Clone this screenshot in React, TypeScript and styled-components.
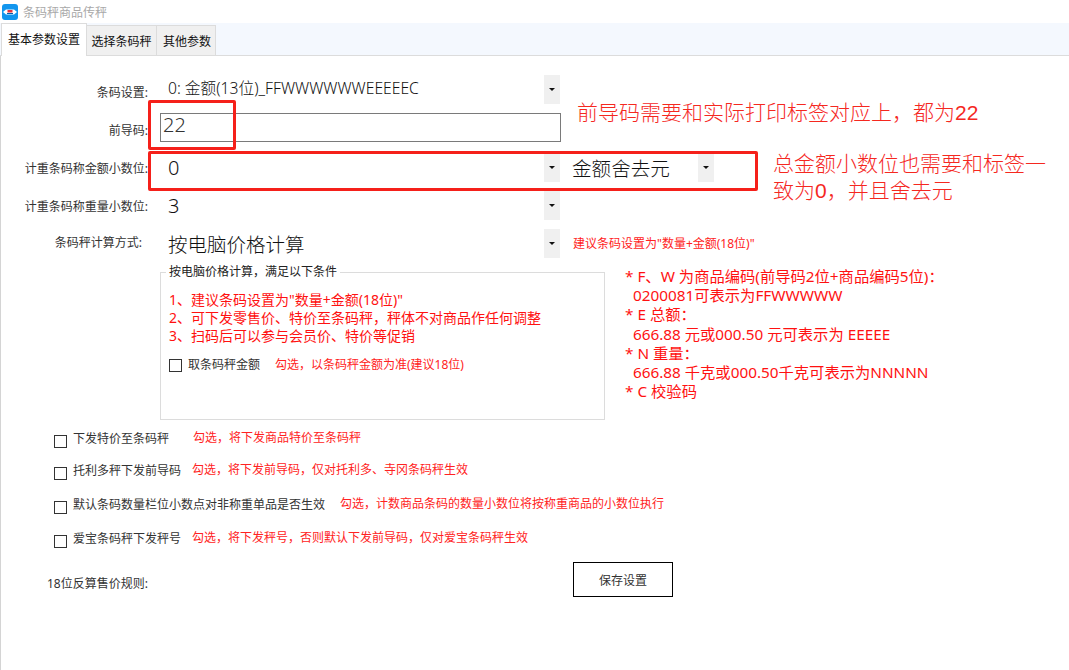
import React from 'react';
import styled, { createGlobalStyle } from 'styled-components';

const GlobalStyle = createGlobalStyle`
  html, body {
    margin: 0;
    padding: 0;
    background: #fff;
  }
  * {
    box-sizing: border-box;
  }
`;

const FONT = `"Noto Sans", "Noto Sans CJK SC", sans-serif`;

const Page = styled.div`
  position: relative;
  width: 1069px;
  height: 670px;
  overflow: hidden;
  background: #fff;
  color: #222;
  font-family: ${FONT};
  font-size: 12px;
`;

const TitleBar = styled.div`
  display: flex;
  align-items: center;
  gap: 5px;
  height: 23px;
  padding-left: 2px;
  color: #a8a8a8;
  font-size: 12px;
`;

const TabStrip = styled.div`
  display: flex;
  align-items: flex-end;
  height: 33px;
  padding-left: 1px;
  background: #f4f8fe;
  border-bottom: 1px solid #dcdcdc;
`;

const Tab = styled.div<{ $active?: boolean; $width: number; $pl?: number }>`
  display: flex;
  align-items: center;
  justify-content: center;
  width: ${(p) => p.$width}px;
  height: ${(p) => (p.$active ? 33 : 31)}px;
  margin-bottom: -1px;
  padding-bottom: ${(p) => (p.$active ? 3 : 0)}px;
  padding-left: ${(p) => p.$pl ?? 0}px;
  background: ${(p) => (p.$active ? '#fff' : '#f0f0f0')};
  border: 1px solid #dcdcdc;
  border-left: ${(p) => (p.$active ? '1px solid #dcdcdc' : 'none')};
  border-bottom: ${(p) => (p.$active ? 'none' : '1px solid #dcdcdc')};
  color: #111;
`;

const Content = styled.div`
  display: flex;
  flex-direction: column;
  height: 615px;
  padding-top: 18px;
  border-left: 1px solid #d4d4d4;
`;

const FormRow = styled.div<{ $mt?: number }>`
  display: flex;
  align-items: center;
  height: 29px;
  margin-top: ${(p) => p.$mt ?? 9}px;
`;

const RowLabel = styled.div<{ $pr?: number; $down?: number; $up?: number }>`
  flex: none;
  width: 147px;
  margin: ${(p) => p.$down ?? 0}px 0 ${(p) => p.$up ?? 0}px;
  padding-right: ${(p) => p.$pr ?? 0}px;
  text-align: right;
  white-space: nowrap;
  color: #333;
`;

const Select = styled.div<{ $width: number; $size: number; $ml?: number }>`
  display: flex;
  align-items: center;
  justify-content: space-between;
  flex: none;
  width: ${(p) => p.$width}px;
  height: 29px;
  margin-left: ${(p) => p.$ml ?? 12}px;
  padding-left: 8px;
  font-size: ${(p) => p.$size}px;
  font-weight: 300;
  color: #111;
  white-space: nowrap;
`;

const SelectValue = styled.span<{ $up?: number }>`
  margin-bottom: ${(p) => p.$up ?? 0}px;
`;

const ArrowBox = styled.span`
  display: flex;
  align-items: center;
  justify-content: center;
  flex: none;
  width: 16px;
  height: 100%;
  background: #f0f0f0;
  &::after {
    content: '';
    border-left: 3px solid transparent;
    border-right: 3px solid transparent;
    border-top: 3px solid #111;
  }
`;

const TextInput = styled.div`
  flex: none;
  display: flex;
  align-items: center;
  width: 401px;
  height: 29px;
  margin-left: 12px;
  padding: 0 0 6px 2px;
  border: 1px solid #7a7a7a;
  font-size: 20px;
  font-weight: 300;
  color: #333;
`;

const Hint = styled.span<{ $ml?: number; $up?: number }>`
  margin: 0 0 ${(p) => p.$up ?? 0}px ${(p) => p.$ml ?? 0}px;
  color: #f22;
  font-size: 12px;
  white-space: nowrap;
`;

const MiddleRow = styled.div`
  display: flex;
  margin-top: 7px;
  height: 155px;
`;

const GroupBox = styled.fieldset`
  flex: none;
  width: 445px;
  height: 155px;
  margin: 0 0 0 159px;
  padding: 12px 0 0 8px;
  border: 1px solid #dcdcdc;
`;

const GroupLegend = styled.legend`
  margin-left: -3px;
  padding: 0 3px;
  color: #222;
  font-size: 12px;
  line-height: 14px;
`;

const RuleList = styled.div`
  color: #f11;
  font-size: 14px;
  line-height: 18px;
`;

const CheckLine = styled.label`
  display: flex;
  align-items: center;
  margin-top: 10px;
  white-space: nowrap;
`;

const CheckBox = styled.span`
  flex: none;
  width: 13px;
  height: 13px;
  border: 1px solid #333;
  background: #fff;
`;

const CheckText = styled.span<{ $width: number; $up?: number }>`
  flex: none;
  width: ${(p) => p.$width}px;
  margin: 0 0 ${(p) => p.$up ?? 2}px 6px;
  color: #333;
  font-size: 12px;
`;

const Notes = styled.div`
  margin: 2px 0 0 20px;
  color: #f11;
  font-size: 15.3px;
  line-height: 19.2px;
  white-space: pre;
`;

const OptionList = styled.div`
  display: flex;
  flex-direction: column;
  margin: 5px 0 0 53px;
`;

const OptionRow = styled.label<{ $mt?: number }>`
  display: flex;
  align-items: center;
  height: 32px;
  margin-top: ${(p) => p.$mt ?? 0}px;
  white-space: nowrap;
`;

const BottomRow = styled.div`
  display: flex;
  align-items: center;
  margin-top: 5px;
`;

const RuleLabel = styled.div`
  flex: none;
  width: 572px;
  padding: 6px 0 0 46px;
  color: #333;
`;

const SaveButton = styled.button`
  width: 100px;
  height: 35px;
  padding: 0;
  background: #fff;
  border: 1px solid #000;
  color: #333;
  font-family: ${FONT};
  font-size: 12px;
`;

const RedFrame = styled.div<{ $x: number; $y: number; $w: number; $h: number }>`
  position: absolute;
  left: ${(p) => p.$x}px;
  top: ${(p) => p.$y}px;
  width: ${(p) => p.$w}px;
  height: ${(p) => p.$h}px;
  border: 3px solid #f5201a;
  border-radius: 2px;
`;

const Remark = styled.div<{ $x: number; $y: number }>`
  position: absolute;
  left: ${(p) => p.$x}px;
  top: ${(p) => p.$y}px;
  color: #f5281f;
  font-family: "Liberation Sans", "Noto Sans CJK SC", sans-serif;
  font-size: 21px;
  font-weight: 300;
  line-height: 28px;
  white-space: nowrap;
`;

const AppLogo = () => (
  <svg width="16" height="16" viewBox="0 0 16 16">
    <rect width="16" height="16" rx="3" fill="#1296ee" />
    <path d="M1 8 L4 5.5 H12 L15 8 L12 10.5 H4 Z" fill="#fff" />
    <rect x="5.5" y="6" width="5" height="2.5" fill="#e8343c" />
    <rect x="5" y="9" width="6" height="1" fill="#0b5fa8" />
  </svg>
);

const notes = `* F、W 为商品编码(前导码2位+商品编码5位)：
  0200081可表示为FFWWWWW
* E 总额：
  666.88 元或000.50 元可表示为 EEEEE
* N 重量：
  666.88 千克或000.50千克可表示为NNNNN
* C 校验码`;

const options = [
  { label: '下发特价至条码秤', width: 120, hint: '勾选，将下发商品特价至条码秤' },
  { label: '托利多秤下发前导码', width: 119, hint: '勾选，将下发前导码，仅对托利多、寺冈条码秤生效' },
  { label: '默认条码数量栏位小数点对非称重单品是否生效', width: 267, hint: '勾选，计数商品条码的数量小数位将按称重商品的小数位执行', mt: 2 },
  { label: '爱宝条码秤下发秤号', width: 119, hint: '勾选，将下发秤号，否则默认下发前导码，仅对爱宝条码秤生效', mt: 2 },
];

export default function App() {
  return (
    <Page>
      <GlobalStyle />
      <TitleBar>
        <AppLogo />
        条码秤商品传秤
      </TitleBar>
      <TabStrip>
        <Tab $active $width={86}>基本参数设置</Tab>
        <Tab $width={70}>选择条码秤</Tab>
        <Tab $width={59} $pl={2}>其他参数</Tab>
      </TabStrip>
      <Content>
        <FormRow $mt={1}>
          <RowLabel $down={4}>条码设置:</RowLabel>
          <Select $width={400} $size={15.7}>
            <SelectValue $up={4}>0: 金额(13位)_FFWWWWWWEEEEEC</SelectValue>
            <ArrowBox />
          </Select>
        </FormRow>
        <FormRow>
          <RowLabel $down={4}>前导码:</RowLabel>
          <TextInput>22</TextInput>
        </FormRow>
        <FormRow $mt={11}>
          <RowLabel>计重条码称金额小数位:</RowLabel>
          <Select $width={400} $size={20}>
            <SelectValue>0</SelectValue>
            <ArrowBox />
          </Select>
          <Select $width={150} $size={19.6} $ml={4}>
            <SelectValue>金额舍去元</SelectValue>
            <ArrowBox />
          </Select>
        </FormRow>
        <FormRow>
          <RowLabel>计重条码称重量小数位:</RowLabel>
          <Select $width={400} $size={20}>
            <SelectValue>3</SelectValue>
            <ArrowBox />
          </Select>
        </FormRow>
        <FormRow>
          <RowLabel $pr={6} $up={4}>条码秤计算方式:</RowLabel>
          <Select $width={400} $size={19.5}>
            <SelectValue>按电脑价格计算</SelectValue>
            <ArrowBox />
          </Select>
          <Hint $ml={13} $up={2}>建议条码设置为"数量+金额(18位)"</Hint>
        </FormRow>
        <MiddleRow>
          <GroupBox>
            <GroupLegend>按电脑价格计算，满足以下条件</GroupLegend>
            <RuleList>
              1、建议条码设置为"数量+金额(18位)"
              <br />
              2、可下发零售价、特价至条码秤，秤体不对商品作任何调整
              <br />
              3、扫码后可以参与会员价、特价等促销
            </RuleList>
            <CheckLine>
              <CheckBox />
              <CheckText $width={87}>取条码秤金额</CheckText>
              <Hint $up={2}>勾选，以条码秤金额为准(建议18位)</Hint>
            </CheckLine>
          </GroupBox>
          <Notes>{notes}</Notes>
        </MiddleRow>
        <OptionList>
          {options.map((o) => (
            <OptionRow key={o.label} $mt={o.mt}>
              <CheckBox />
              <CheckText $width={o.width} $up={7}>{o.label}</CheckText>
              <Hint $up={8}>{o.hint}</Hint>
            </OptionRow>
          ))}
        </OptionList>
        <BottomRow>
          <RuleLabel>18位反算售价规则:</RuleLabel>
          <SaveButton>保存设置</SaveButton>
        </BottomRow>
      </Content>
      <RedFrame $x={148} $y={100} $w={88} $h={50} />
      <RedFrame $x={148} $y={151} $w={610} $h={40} />
      <Remark $x={577} $y={99}>前导码需要和实际打印标签对应上，都为22</Remark>
      <Remark $x={773} $y={150}>总金额小数位也需要和标签一</Remark>
      <Remark $x={773} $y={177}>致为0，并且舍去元</Remark>
    </Page>
  );
}
